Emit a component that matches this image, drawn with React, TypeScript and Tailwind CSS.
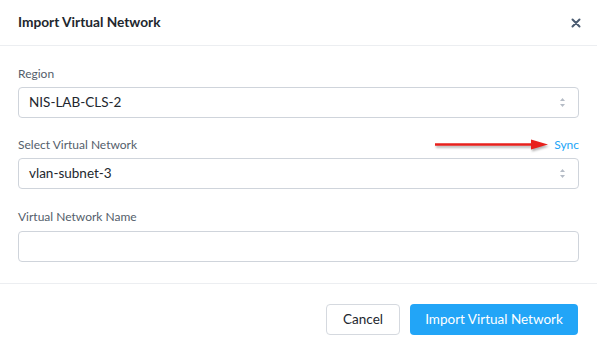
import React from "react";

function UpDown() {
  return (
    <svg width="7" height="11" viewBox="0 0 7 11" className="shrink-0">
      <path d="M3.5 1 L6 4 H1 Z" fill="#b5bcc6" />
      <path d="M3.5 10 L6 7 H1 Z" fill="#b5bcc6" />
    </svg>
  );
}

function Select({ value }: { value: string }) {
  return (
    <div className="flex h-[31px] items-center justify-between rounded-[4px] border border-[#cfd4db] pl-[10px] pr-[12px] text-[13.5px] text-[#22272e]">
      <span>{value}</span>
      <UpDown />
    </div>
  );
}

export default function App() {
  return (
    <div
      className="flex h-[354px] w-[597px] flex-col bg-white"
      style={{ fontFamily: "Lato, 'Open Sans', sans-serif" }}
    >
      <div className="flex h-[46px] items-center justify-between border-b border-[#eceef1] pl-[18px] pr-[16px]">
        <span className="text-[13.7px] font-bold text-[#22272e]">Import Virtual Network</span>
        <svg width="10" height="10" viewBox="0 0 10 10">
          <path d="M1.5 1.5 L8.5 8.5 M8.5 1.5 L1.5 8.5" stroke="#4a5b70" strokeWidth="2" strokeLinecap="round" />
        </svg>
      </div>
      <div className="flex flex-col px-[18px] pt-[19px]">
        <div className="h-[17px] text-[12px] leading-[17px] text-[#545e6b]">Region</div>
        <div className="mt-[5px]">
          <Select value="NIS-LAB-CLS-2" />
        </div>
        <div className="mt-[18px] flex h-[17px] items-center justify-between text-[12px] leading-[17px]">
          <span className="text-[#545e6b]">Select Virtual Network</span>
          <div className="flex items-center">
            <svg width="116" height="11" viewBox="0 0 116 11" className="mr-[4px]" style={{ filter: "drop-shadow(1px 2px 1px rgba(0,0,0,0.3))" }}>
              <path d="M1 5.5 H100" stroke="#e8201c" strokeWidth="2.4" />
              <path d="M97 0.5 L114 5.5 L97 10.5 Z" fill="#e8201c" />
            </svg>
            <span className="text-[#22a5f7]">Sync</span>
          </div>
        </div>
        <div className="mt-[5px]">
          <Select value="vlan-subnet-3" />
        </div>
        <div className="mt-[19px] h-[17px] text-[12px] leading-[17px] text-[#545e6b]">Virtual Network Name</div>
        <div className="mt-[6px] h-[31px] rounded-[4px] border border-[#cfd4db]" />
      </div>
      <div className="mt-[21px] border-t border-[#eceef1]" />
      <div className="flex justify-end gap-[10px] px-[19px] pt-[20px]">
        <button className="h-[31px] w-[74px] rounded-[4px] border border-[#d5d9df] bg-white text-[13.5px] text-[#22272e]">
          Cancel
        </button>
        <button className="h-[31px] w-[168px] rounded-[4px] bg-[#22a5f7] text-[13.5px] text-white">
          Import Virtual Network
        </button>
      </div>
    </div>
  );
}
